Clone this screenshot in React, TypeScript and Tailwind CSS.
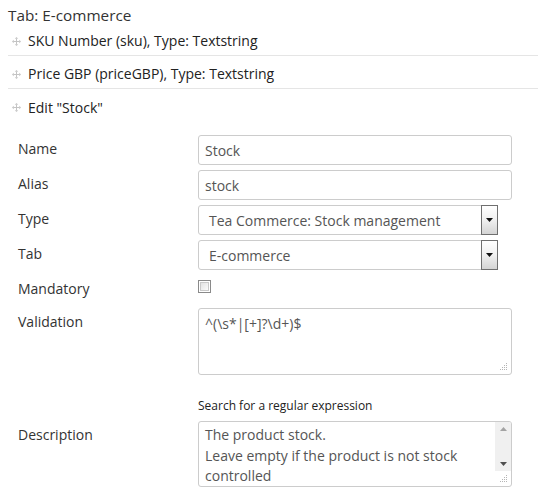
import React from "react";

const MoveIcon = () => (
  <svg width="9" height="9" viewBox="0 0 9 9" className="shrink-0">
    <g fill="#c4c4c4">
      <rect x="4" y="1.5" width="1" height="6" />
      <rect x="1.5" y="4" width="6" height="1" />
      <polygon points="4.5,0 2.8,1.8 6.2,1.8" />
      <polygon points="4.5,9 2.8,7.2 6.2,7.2" />
      <polygon points="0,4.5 1.8,2.8 1.8,6.2" />
      <polygon points="9,4.5 7.2,2.8 7.2,6.2" />
    </g>
  </svg>
);

const Grip = () => (
  <svg width="8" height="8" viewBox="0 0 8 8" className="absolute right-[3px] bottom-[3px]">
    <g fill="#b5b5b5">
      <rect x="6" y="0" width="1" height="1" />
      <rect x="4" y="2" width="1" height="1" />
      <rect x="6" y="2" width="1" height="1" />
      <rect x="2" y="4" width="1" height="1" />
      <rect x="4" y="4" width="1" height="1" />
      <rect x="6" y="4" width="1" height="1" />
      <rect x="0" y="6" width="1" height="1" />
      <rect x="2" y="6" width="1" height="1" />
      <rect x="4" y="6" width="1" height="1" />
      <rect x="6" y="6" width="1" height="1" />
    </g>
  </svg>
);

const Row = ({ children, border = true }: { children: React.ReactNode; border?: boolean }) => (
  <div
    className={
      "flex items-center gap-[7px] ml-[8px] pl-[4px] pt-[8px] pb-[4px] h-[33px] text-[14px] leading-[20px] text-[#222] " +
      (border ? "border-b border-[#e5e5e5]" : "")
    }
  >
    <MoveIcon />
    <span>{children}</span>
  </div>
);

const Label = ({ children }: { children: React.ReactNode }) => (
  <div className="pt-[4px] text-[14px] leading-[20px] text-[#333]">{children}</div>
);

const TextInput = ({ value }: { value: string }) => (
  <div className="h-[30px] w-[314px] border border-[#cccccc] rounded-[3px] bg-white px-[6px] flex items-center text-[14px] text-[#555]">
    {value}
  </div>
);

const Select = ({ value }: { value: string }) => (
  <div className="h-[30px] w-[300px] border border-[#cccccc] rounded-l-[3px] bg-white flex items-stretch">
    <div className="flex-1 flex items-center pl-[10px] text-[14px] text-[#555]">{value}</div>
    <div className="w-[17px] -my-[1px] -mr-[1px] border border-[#6f6f6f] bg-gradient-to-b from-[#ffffff] via-[#f0f0f0] to-[#d4d4d4] flex items-center justify-center">
      <svg width="7" height="4" viewBox="0 0 7 4">
        <polygon points="0,0 7,0 3.5,4" fill="#111" />
      </svg>
    </div>
  </div>
);

export default function App() {
  return (
    <div className="w-[538px] h-[498px] bg-white overflow-hidden" style={{ fontFamily: '"Open Sans", "Noto Sans", sans-serif' }}>
      <div className="pl-[8px] pt-[4px] h-[23px] text-[15.3px] leading-[22px] text-[#333]">Tab: E-commerce</div>
      <Row>SKU Number (sku), Type: Textstring</Row>
      <Row>Price GBP (priceGBP), Type: Textstring</Row>
      <Row border={false}>Edit "Stock"</Row>

      <div className="grid grid-cols-[180px_314px] ml-[18px] mt-[13px] gap-y-[5px]">
        <Label>Name</Label>
        <TextInput value="Stock" />

        <Label>Alias</Label>
        <TextInput value="stock" />

        <Label>Type</Label>
        <Select value="Tea Commerce: Stock management" />

        <Label>Tab</Label>
        <Select value="E-commerce" />

        <Label>Mandatory</Label>
        <div className="h-[28px] pt-[5px]">
          <div className="w-[13px] h-[13px] border border-[#8a8a8a] bg-white p-[1px]">
            <div className="w-full h-full border border-[#c9c9c9] bg-gradient-to-br from-[#e2e2e2] to-[#fbfbfb]" />
          </div>
        </div>

        <Label>Validation</Label>
        <div>
          <div className="relative h-[67px] border border-[#cccccc] rounded-[3px] bg-white px-[6px] pt-[5px] text-[14px] leading-[20px] text-[#555]">
            ^(\s*|[+]?\d+)$
            <Grip />
          </div>
          <div className="mt-[23px] text-[12px] leading-[16px] text-[#222]">Search for a regular expression</div>
        </div>

        <div className="pt-[2px]">
          <Label>Description</Label>
        </div>
        <div className="mt-[2px] relative h-[66px] border border-[#cccccc] rounded-[3px] bg-white pl-[6px] pr-[20px] pt-[3px] text-[14px] leading-[20.5px] text-[#555] overflow-hidden">
          <div>The product stock.</div>
          <div>Leave empty if the product is not stock controlled</div>
          <div className="absolute right-0 top-0 w-[16px] h-[49px] bg-[#f0f0f0] flex flex-col items-center justify-between py-[5px]">
            <svg width="7" height="4" viewBox="0 0 7 4">
              <polygon points="0,4 7,4 3.5,0" fill="#a3a3a3" />
            </svg>
            <svg width="7" height="4" viewBox="0 0 7 4">
              <polygon points="0,0 7,0 3.5,4" fill="#505050" />
            </svg>
          </div>
          <Grip />
        </div>
      </div>
    </div>
  );
}
